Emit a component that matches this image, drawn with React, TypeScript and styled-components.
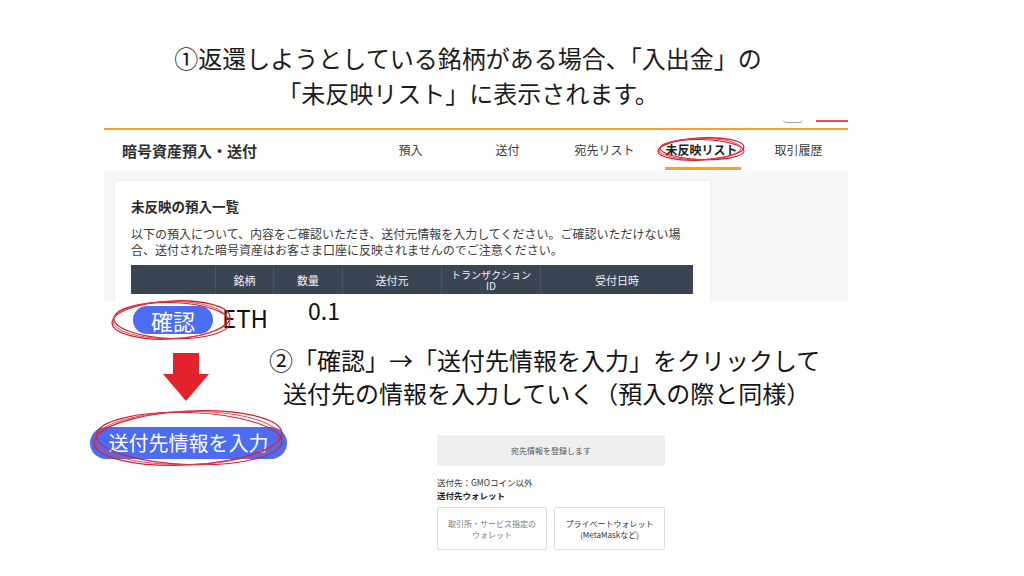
import styled, { createGlobalStyle } from 'styled-components';

const GlobalStyle = createGlobalStyle`
  body {
    margin: 0;
    background: #ffffff;
    font-family: 'Noto Sans CJK JP', 'Noto Sans', sans-serif;
    color: #1a1a1a;
  }
`;

const tabs = ['預入', '送付', '宛先リスト', '未反映リスト', '取引履歴'];

const columns = [
  { label: '', width: 84 },
  { label: '銘柄', width: 58 },
  { label: '数量', width: 69 },
  { label: '送付元', width: 99 },
  { label: 'トランザクション\nID', width: 99 },
  { label: '受付日時', width: 153 },
];

interface ScribbleProps {
  w: number;
  h: number;
}

// hand-drawn red circle laid over a target
const Scribble = ({ w, h }: ScribbleProps) => {
  const cx = w / 2;
  const cy = h / 2;
  return (
    <svg width={w} height={h} viewBox={`0 0 ${w} ${h}`}>
      <ellipse cx={cx} cy={cy} rx={cx - 2} ry={cy - 2} fill="none" stroke="#d4202b" strokeWidth={1.3} transform={`rotate(-3 ${cx} ${cy})`} />
      <ellipse cx={cx + 1} cy={cy + 0.5} rx={cx - 3} ry={cy - 3} fill="none" stroke="#d4202b" strokeWidth={1.1} transform={`rotate(2 ${cx} ${cy})`} />
      <ellipse cx={cx - 1} cy={cy} rx={cx - 4} ry={cy - 2.5} fill="none" stroke="#e03a44" strokeWidth={0.9} transform={`rotate(-1 ${cx} ${cy})`} />
    </svg>
  );
};

const App = () => {
  return (
    <Slide>
      <GlobalStyle />
      <Title>
        <div>①返還しようとしている銘柄がある場合、「入出金」の</div>
        <div>「未反映リスト」に表示されます。</div>
      </Title>

      <Panel>
        <TopStrip>
          <GreyMark />
          <RedMark />
        </TopStrip>
        <Header>
          <HeaderTitle>暗号資産預入・送付</HeaderTitle>
          <Tabs>
            {tabs.map((t) => (
              <Tab key={t} active={t === '未反映リスト'}>
                {t}
                {t === '未反映リスト' && (
                  <Overlay top={6} left={3}>
                    <Scribble w={90} h={26} />
                  </Overlay>
                )}
              </Tab>
            ))}
          </Tabs>
        </Header>
        <Body>
          <Card>
            <CardTitle>未反映の預入一覧</CardTitle>
            <Notice>
              以下の預入について、内容をご確認いただき、送付元情報を入力してください。ご確認いただけない場合、送付された暗号資産はお客さま口座に反映されませんのでご注意ください。
            </Notice>
            <TableHead>
              {columns.map((c, i) => (
                <HeadCell key={i} style={{ width: c.width }} small={c.label.includes('\n')}>
                  {c.label}
                </HeadCell>
              ))}
            </TableHead>
          </Card>
        </Body>
      </Panel>

      <ConfirmRow>
        <PillWrap gap={4}>
          <ConfirmPill>確認</ConfirmPill>
          <Overlay top={-7} left={-23}>
            <Scribble w={122} h={42} />
          </Overlay>
        </PillWrap>
        <Ticker>ETH</Ticker>
        <Amount>0.1</Amount>
      </ConfirmRow>

      <Lower>
        <LeftCol>
          <ArrowBox>
            <svg width="46" height="48" viewBox="0 0 46 48">
              <polygon points="10,0 36,0 36,21 46,21 23,48 0,21 10,21" fill="#e5222b" />
            </svg>
          </ArrowBox>
          <PillWrap gap={26}>
            <EntryPill>送付先情報を入力</EntryPill>
            <Overlay top={-18} left={2}>
              <Scribble w={192} h={58} />
            </Overlay>
          </PillWrap>
        </LeftCol>
        <RightCol>
          <Instruction>
            <div>②「確認」→「送付先情報を入力」をクリックして</div>
            <IndentLine>送付先の情報を入力していく（預入の際と同様）</IndentLine>
          </Instruction>
          <Form>
            <FormBanner>宛先情報を登録します</FormBanner>
            <FormNote>送付先：GMOコイン以外</FormNote>
            <FormLabel>送付先ウォレット</FormLabel>
            <Choices>
              <Choice muted>
                取引所・サービス指定の
                <br />
                ウォレット
              </Choice>
              <Choice>
                プライベートウォレット
                <br />
                (MetaMaskなど)
              </Choice>
            </Choices>
          </Form>
        </RightCol>
      </Lower>
    </Slide>
  );
};

export default App;

const Slide = styled.div`
  width: 1024px;
  height: 576px;
  overflow: hidden;
  background: #ffffff;
`;

const Title = styled.div`
  width: 936px;
  padding-top: 40px;
  text-align: center;
  font-size: 24px;
  line-height: 35px;
  color: #1c1c1c;
`;

const Panel = styled.div`
  margin-left: 104px;
  width: 744px;
`;

const TopStrip = styled.div`
  height: 18px;
  display: flex;
  justify-content: flex-end;
  align-items: flex-end;
  gap: 13px;
`;

const GreyMark = styled.div`
  width: 20px;
  height: 3px;
  margin-bottom: 5px;
  border-bottom: 1.5px solid #9aa0a8;
  border-radius: 0 0 6px 6px;
`;

const RedMark = styled.div`
  width: 32px;
  height: 2px;
  margin-bottom: 6px;
  background: #d9534f;
`;

const Header = styled.div`
  height: 41px;
  border-top: 2px solid #f3a328;
  display: flex;
  align-items: center;
  background: #ffffff;
`;

const HeaderTitle = styled.div`
  padding-left: 18px;
  font-size: 15px;
  font-weight: 700;
  color: #2f2f2f;
`;

const Tabs = styled.div`
  margin-left: auto;
  margin-right: 1px;
  display: flex;
  height: 100%;
`;

const Tab = styled.div<{ active?: boolean }>`
  position: relative;
  width: 97px;
  height: 100%;
  display: flex;
  align-items: center;
  justify-content: center;
  font-size: 12px;
  font-weight: ${({ active }) => (active ? 700 : 400)};
  color: ${({ active }) => (active ? '#1f1f1f' : '#3b3b3b')};
  padding-bottom: 3px;
  box-sizing: border-box;

  &::after {
    content: '';
    display: ${({ active }) => (active ? 'block' : 'none')};
    position: absolute;
    left: 12px;
    right: 9px;
    bottom: 1px;
    height: 3px;
    background: #f3a328;
  }
`;

const Overlay = styled.div<{ top: number; left: number }>`
  position: absolute;
  top: ${({ top }) => top}px;
  left: ${({ left }) => left}px;
  pointer-events: none;
  line-height: 0;
`;

const Body = styled.div`
  height: 131px;
  overflow: hidden;
  background: #f6f7f9;
  padding: 10px 0 0 11px;
  box-sizing: border-box;
`;

const Card = styled.div`
  width: 595px;
  height: 140px;
  background: #ffffff;
  box-shadow: 0 0 3px rgba(0, 0, 0, 0.08);
  padding: 15px 17px 0 16px;
  box-sizing: border-box;
`;

const CardTitle = styled.div`
  font-size: 13.5px;
  font-weight: 700;
  line-height: 20px;
  color: #2a2a2a;
`;

const Notice = styled.div`
  margin-top: 10px;
  font-size: 12px;
  line-height: 16px;
  color: #3a3a3a;
`;

const TableHead = styled.div`
  margin-top: 7px;
  display: flex;
  height: 29px;
  background: #3a4453;
`;

const HeadCell = styled.div<{ small?: boolean }>`
  display: flex;
  align-items: center;
  justify-content: center;
  text-align: center;
  white-space: pre-line;
  color: #f2f3f5;
  font-size: ${({ small }) => (small ? '10px' : '11px')};
  line-height: ${({ small }) => (small ? '11px' : '14px')};
  border-left: 1px solid #4a5463;
  box-sizing: border-box;

  &:first-child {
    border-left: none;
  }
`;

const ConfirmRow = styled.div`
  display: flex;
  align-items: flex-start;
  padding-left: 133px;
  height: 34px;
`;

const PillWrap = styled.div<{ gap: number }>`
  position: relative;
  width: fit-content;
  margin-top: ${({ gap }) => gap}px;
`;

const ConfirmPill = styled.div`
  width: 80px;
  height: 28px;
  border-radius: 14px;
  background: #4c6cf3;
  color: #ffffff;
  font-size: 22px;
  line-height: 28px;
  text-align: center;
`;

const Ticker = styled.div`
  margin-left: 9px;
  margin-top: 1px;
  font-size: 24px;
  line-height: 30px;
  color: #111111;
`;

const Amount = styled.div`
  margin-left: 40px;
  margin-top: -5px;
  font-size: 23px;
  line-height: 26px;
  color: #111111;
`;

const Lower = styled.div`
  display: flex;
  padding-left: 90px;
`;

const LeftCol = styled.div`
  width: 182px;
  display: flex;
  flex-direction: column;
`;

const ArrowBox = styled.div`
  margin-top: 17px;
  margin-left: 73px;
  height: 48px;
  line-height: 0;
`;

const EntryPill = styled.div`
  width: 197px;
  height: 32px;
  border-radius: 16px;
  background: #4c6cf3;
  color: #ffffff;
  font-size: 20px;
  line-height: 32px;
  text-align: center;
  white-space: nowrap;
`;

const RightCol = styled.div`
  display: flex;
  flex-direction: column;
`;

const Instruction = styled.div`
  margin-top: 7px;
  margin-left: -3px;
  font-size: 24px;
  line-height: 33px;
  color: #141414;
  white-space: nowrap;
`;

const IndentLine = styled.div`
  padding-left: 14px;
`;

const Form = styled.div`
  margin-top: 26px;
  margin-left: 165px;
  width: 228px;
  display: flex;
  flex-direction: column;
`;

const FormBanner = styled.div`
  height: 31px;
  background: #efefef;
  display: flex;
  align-items: center;
  justify-content: center;
  font-size: 8px;
  color: #555555;
`;

const FormNote = styled.div`
  margin-top: 10px;
  font-size: 8.5px;
  line-height: 12px;
  color: #333333;
`;

const FormLabel = styled.div`
  margin-top: 1px;
  font-size: 8.5px;
  line-height: 13px;
  font-weight: 700;
  color: #1c1c1c;
`;

const Choices = styled.div`
  margin-top: 5px;
  display: grid;
  grid-template-columns: 110px 111px;
  gap: 7px;
`;

const Choice = styled.div<{ muted?: boolean }>`
  height: 43px;
  border: 1px solid #dddddd;
  border-radius: 2px;
  box-sizing: border-box;
  display: flex;
  align-items: center;
  justify-content: center;
  text-align: center;
  font-size: 8px;
  line-height: 11px;
  color: ${({ muted }) => (muted ? '#7a7a7a' : '#333333')};
`;
